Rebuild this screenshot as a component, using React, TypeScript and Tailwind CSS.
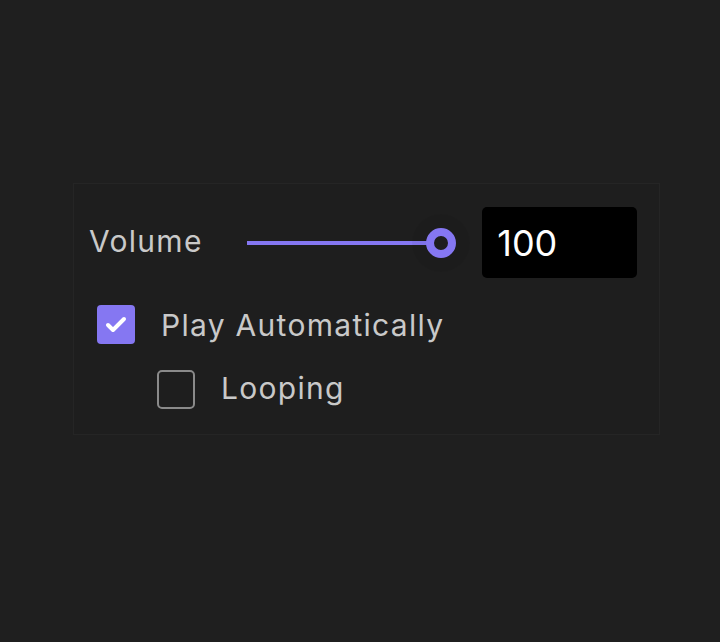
import { Check } from 'lucide-react';

export default function App() {
  return (
    <div className="w-[720px] h-[642px] bg-[#1f1f1f] flex items-start justify-start pt-[183px] pl-[73px] font-['Inter',sans-serif]">
      <div className="w-[587px] h-[252px] border border-[#252525] bg-[#1e1e1e] pt-[23px] pl-[15px] pr-[22px]">
        {/* Volume row */}
        <div className="flex items-center h-[71px]">
          <span className="text-[30px] tracking-[0.043em] text-[#c9c9c9] leading-none w-[158px] -mt-[4px]">Volume</span>
          <div className="relative w-[211px] h-[32px] flex items-center">
            <div className="h-[4px] w-[190px] bg-[#8577f2]" />
            <div className="absolute right-[1px] top-[1px] w-[30px] h-[30px] rounded-full border-[8.5px] border-[#8577f2] bg-[#1e1e1e] shadow-[0_0_0_14px_rgba(0,0,0,0.04)]" />
          </div>
          <div className="ml-[25px] w-[155px] h-[71px] bg-black rounded-[5px] flex items-center pl-[15px]">
            <span className="text-[36px] text-white leading-none">100</span>
          </div>
        </div>

        {/* Play automatically */}
        <div className="flex items-center mt-[27px] pl-[8px]">
          <div className="w-[38px] h-[39px] rounded-[4px] bg-[#8577f2] flex items-center justify-center">
            <Check className="w-[24px] h-[24px] text-white" strokeWidth={4} />
          </div>
          <span className="ml-[26px] text-[30px] tracking-[0.043em] text-[#c9c9c9] leading-none">Play Automatically</span>
        </div>

        {/* Looping */}
        <div className="flex items-center mt-[26px] pl-[68px]">
          <div className="w-[38px] h-[39px] rounded-[5px] border-2 border-[#8a8a8a]" />
          <span className="ml-[26px] text-[30px] tracking-[0.043em] text-[#c9c9c9] leading-none -mt-[3px]">Looping</span>
        </div>
      </div>
    </div>
  );
}
